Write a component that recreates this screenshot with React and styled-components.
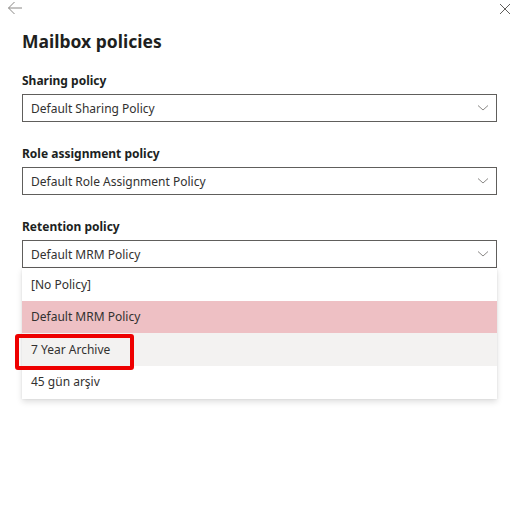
import styled, { createGlobalStyle } from 'styled-components';

const GlobalStyle = createGlobalStyle`
  body {
    margin: 0;
    background: #ffffff;
    font-family: 'Segoe UI', 'Noto Sans', sans-serif;
    color: #323130;
  }
`;

const Panel = styled.div`
  width: 524px;
  height: 529px;
  background: #ffffff;
`;

const TopBar = styled.div`
  display: flex;
  justify-content: space-between;
  align-items: flex-start;
  height: 16px;
  padding: 0 13px 0 7px;
`;

const IconButton = styled.span`
  display: flex;
  margin-top: ${p => p.top}px;
  color: #8a8886;
`;

const Content = styled.div`
  padding: 13px 27px 0 22px;
`;

const Title = styled.h1`
  margin: 0 0 18px;
  font-size: 17.5px;
  line-height: 24px;
  font-weight: 700;
  color: #201f1e;
`;

const Field = styled.div`
  display: flex;
  flex-direction: column;
  margin-bottom: 22px;
`;

const Label = styled.label`
  font-size: 12px;
  font-weight: 700;
  line-height: 20px;
  color: #201f1e;
  margin-bottom: 3px;
`;

const Select = styled.div`
  display: flex;
  align-items: center;
  justify-content: space-between;
  height: 28px;
  box-sizing: border-box;
  border: 1px solid #605e5c;
  padding: 0 7px 0 8px;
  font-size: 12px;
  color: #323130;
`;

const Chevron = () => (
  <svg width="12" height="8" viewBox="0 0 12 8">
    <path d="M1 1.5 L6 6 L11 1.5" fill="none" stroke="#8a8886" strokeWidth="1" />
  </svg>
);

const Menu = styled.div`
  box-shadow: 0 3px 6px rgba(0, 0, 0, 0.13), 0 0 2px rgba(0, 0, 0, 0.08);
  background: #ffffff;
  padding-bottom: 1px;
`;

const Option = styled.div`
  position: relative;
  display: flex;
  align-items: center;
  height: 32.5px;
  padding-left: 9px;
  font-size: 12px;
  color: #323130;
  background: ${p => (p.$selected ? '#eec0c4' : p.$hover ? '#f3f2f1' : '#ffffff')};
`;

const Highlight = styled.span`
  position: absolute;
  z-index: 1;
  left: -7px;
  top: 1px;
  width: 119px;
  height: 36px;
  box-sizing: border-box;
  border: 4px solid #ee0000;
  border-radius: 3px;
`;

const fields = [
  { label: 'Sharing policy', value: 'Default Sharing Policy' },
  { label: 'Role assignment policy', value: 'Default Role Assignment Policy' },
];

const options = ['[No Policy]', 'Default MRM Policy', '7 Year Archive', '45 gün arşiv'];

const App = () => (
  <Panel>
    <GlobalStyle />
    <TopBar>
      <IconButton top={1}>
        <svg width="16" height="14" viewBox="0 0 16 14">
          <path d="M15 7 H1.5 M7.5 1 L1.5 7 L7.5 13" fill="none" stroke="currentColor" strokeWidth="1" />
        </svg>
      </IconButton>
      <IconButton top={3}>
        <svg width="12" height="12" viewBox="0 0 12 12">
          <path d="M1 1 L11 11 M11 1 L1 11" fill="none" stroke="#605e5c" strokeWidth="1" />
        </svg>
      </IconButton>
    </TopBar>
    <Content>
      <Title>Mailbox policies</Title>
      {fields.map(f => (
        <Field key={f.label}>
          <Label>{f.label}</Label>
          <Select>
            {f.value}
            <Chevron />
          </Select>
        </Field>
      ))}
      <Field>
        <Label>Retention policy</Label>
        <Select>
          Default MRM Policy
          <Chevron />
        </Select>
        <Menu>
          {options.map((o, i) => (
            <Option key={o} $selected={i === 1} $hover={i === 2}>
              {o}
              {i === 2 && <Highlight />}
            </Option>
          ))}
        </Menu>
      </Field>
    </Content>
  </Panel>
);

export default App;
